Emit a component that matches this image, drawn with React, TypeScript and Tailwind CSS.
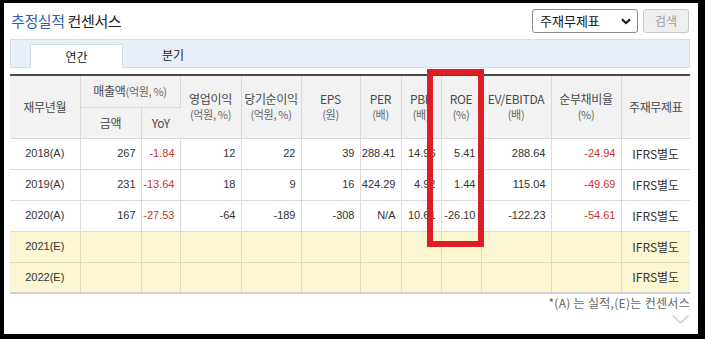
import React from "react";

const F = { fontFamily: '"Liberation Sans", "Noto Sans CJK KR", sans-serif' };
const K = { fontFamily: '"Noto Sans CJK KR", "Liberation Sans", sans-serif' };

type Row = { y: string; est?: boolean; v: string[] };

const rows: Row[] = [
  { y: "2018(A)", v: ["267", "-1.84", "12", "22", "39", "288.41", "14.96", "5.41", "288.64", "-24.94"] },
  { y: "2019(A)", v: ["231", "-13.64", "18", "9", "16", "424.29", "4.92", "1.44", "115.04", "-49.69"] },
  { y: "2020(A)", v: ["167", "-27.53", "-64", "-189", "-308", "N/A", "10.61", "-26.10", "-122.23", "-54.61"] },
  { y: "2021(E)", est: true, v: ["", "", "", "", "", "", "", "", "", ""] },
  { y: "2022(E)", est: true, v: ["", "", "", "", "", "", "", "", "", ""] },
];

const widths = [70, 61, 39, 61, 60, 59, 41, 40, 40, 70, 70, 69];

function HeadCell({ top, unit, rowSpan }: { top: string; unit?: string; rowSpan?: number }) {
  return (
    <th
      rowSpan={rowSpan}
      className="border-r border-b border-[#d9d9d9] last:border-r-0 bg-[#f2f2f2] font-normal text-[#4a4a4a] text-[12px] leading-[16px] p-0 text-center align-middle"
      style={K}
    >
      <div className="tracking-[-0.3px] leading-[16px]">{top}</div>
      {unit && <div className="text-[11px] leading-[15px] text-[#666] tracking-[-0.3px]">{unit}</div>}
    </th>
  );
}

export default function App() {
  return (
    <div className="bg-black w-[705px] h-[339px] pt-[3px] pl-[4px]">
      <div className="relative bg-white w-[694px] h-[331px] pt-[6px] pl-[6px] pr-[8px]" style={K}>
        {/* top row */}
        <div className="flex items-center justify-between h-[24px]">
          <div className="text-[15px] tracking-[-0.4px] pl-[1px]">
            <span className="text-[#2f5fb3]">추정실적</span>{" "}
            <span className="text-[#222]">컨센서스</span>
          </div>
          <div className="flex items-center gap-[5px] pr-[1px]">
            <div className="w-[106px] h-[24px] border border-[#8a8a8a] rounded-[3px] bg-white flex items-center justify-between pl-[7px] pr-[6px] text-[13px] text-[#111]">
              <span>주재무제표</span>
              <svg width="10" height="7" viewBox="0 0 10 7">
                <path d="M1 1.2 L5 5.2 L9 1.2" fill="none" stroke="#111" strokeWidth="2" />
              </svg>
            </div>
            <div className="w-[46px] h-[24px] border border-[#c9c9c9] rounded-[3px] bg-[#efefef] flex items-center justify-center text-[12px] text-[#a0a0a0]">
              검색
            </div>
          </div>
        </div>

        {/* tabs */}
        <div className="mt-[6px] h-[29px] bg-[#e9eff8] border border-[#d3dcea] flex items-end pl-[19px]">
          <div className="w-[93px] h-[24px] bg-white border-t border-l border-r border-[#d3dcea] flex items-center justify-center text-[12px] text-[#222] -mb-px">
            연간
          </div>
          <div className="w-[100px] h-[24px] flex items-center justify-center text-[12px] text-[#222]">분기</div>
        </div>

        {/* table */}
        <table className="mt-[6px] w-[680px] table-fixed border-collapse border-t-[2px] border-t-[#4a4a4a] border-b-[2px] border-b-[#cfcfcf]">
          <colgroup>
            {widths.map((w, i) => (
              <col key={i} style={{ width: w }} />
            ))}
          </colgroup>
          <thead>
            <tr className="h-[32px]">
              <HeadCell top="재무년월" rowSpan={2} />
              <th
                colSpan={2}
                className="border-r border-b border-[#d9d9d9] bg-[#f2f2f2] font-normal text-[#4a4a4a] text-[12px] p-0 text-center tracking-[-0.3px]"
                style={K}
              >
                매출액<span className="text-[11px] text-[#666]">(억원, %)</span>
              </th>
              <HeadCell top="영업이익" unit="(억원, %)" rowSpan={2} />
              <HeadCell top="당기순이익" unit="(억원, %)" rowSpan={2} />
              <HeadCell top="EPS" unit="(원)" rowSpan={2} />
              <HeadCell top="PER" unit="(배)" rowSpan={2} />
              <HeadCell top="PBR" unit="(배)" rowSpan={2} />
              <HeadCell top="ROE" unit="(%)" rowSpan={2} />
              <HeadCell top="EV/EBITDA" unit="(배)" rowSpan={2} />
              <HeadCell top="순부채비율" unit="(%)" rowSpan={2} />
              <HeadCell top="주재무제표" rowSpan={2} />
            </tr>
            <tr className="h-[31px]">
              <HeadCell top="금액" />
              <HeadCell top="YoY" />
            </tr>
          </thead>
          <tbody>
            {rows.map((r, ri) => (
              <tr key={ri} className={`h-[31px] ${r.est ? "bg-[#fdf6d3]" : "bg-white"}`}>
                <td
                  className={`border-r border-b ${r.est ? "border-[#e2dcbc]" : "border-[#dcdcdc]"} text-center text-[11px] text-[#333] p-0`}
                  style={F}
                >
                  {r.y}
                </td>
                {r.v.map((v, i) => (
                  <td
                    key={i}
                    className={`border-r border-b ${r.est ? "border-[#e2dcbc]" : "border-[#dcdcdc]"} text-right pr-[5px] text-[11px] p-0 ${
                      (i === 1 || i === 9) && v.startsWith("-") ? "text-[#c0392b]" : "text-[#333]"
                    }`}
                    style={F}
                  >
                    {v}
                  </td>
                ))}
                <td
                  className={`border-b ${r.est ? "border-[#e2dcbc]" : "border-[#dcdcdc]"} text-center text-[12px] text-[#333] p-0`}
                  style={K}
                >
                  IFRS별도
                </td>
              </tr>
            ))}
          </tbody>
        </table>

        <div className="w-[680px] flex justify-end mt-[1px] text-[12px] text-[#666] tracking-[0.3px] leading-[15px]">
          *(A) 는 실적,(E)는 컨센서스
        </div>
        <div className="w-[680px] flex justify-end mt-[5px] pr-[1px]">
          <svg width="17" height="9" viewBox="0 0 17 9">
            <path d="M0.5 0.5 L8.5 8 L16.5 0.5" fill="none" stroke="#c8c8c8" strokeWidth="1.2" />
          </svg>
        </div>

        {/* red highlight box */}
        <div className="absolute left-[423px] top-[66px] w-[57px] h-[178px] border-[6px] border-[#dc1f27]" />
      </div>
    </div>
  );
}
